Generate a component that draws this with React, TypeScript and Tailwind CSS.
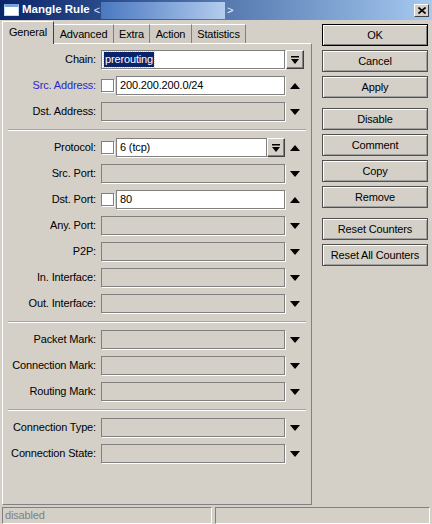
import React from "react";

type Field = {
  label: string;
  blue?: boolean;
  check?: boolean;
  value?: string;
  selected?: boolean;
  arrow?: "up" | "down";
  combo?: boolean;
  chain?: boolean;
};

const groups: Field[][] = [
  [
    { label: "Chain:", value: "prerouting", selected: true, chain: true },
    { label: "Src. Address:", blue: true, check: true, value: "200.200.200.0/24", arrow: "up" },
    { label: "Dst. Address:", arrow: "down" },
  ],
  [
    { label: "Protocol:", check: true, value: "6 (tcp)", combo: true, arrow: "up" },
    { label: "Src. Port:", arrow: "down" },
    { label: "Dst. Port:", check: true, value: "80", arrow: "up" },
    { label: "Any. Port:", arrow: "down" },
    { label: "P2P:", arrow: "down" },
    { label: "In. Interface:", arrow: "down" },
    { label: "Out. Interface:", arrow: "down" },
  ],
  [
    { label: "Packet Mark:", arrow: "down" },
    { label: "Connection Mark:", arrow: "down" },
    { label: "Routing Mark:", arrow: "down" },
  ],
  [
    { label: "Connection Type:", arrow: "down" },
    { label: "Connection State:", arrow: "down" },
  ],
];

const tabs = [
  { name: "Advanced", w: "w-[60px]" },
  { name: "Extra", w: "w-[36px]" },
  { name: "Action", w: "w-[42px]" },
  { name: "Statistics", w: "w-[54px]" },
];

const buttons = [
  ["OK", "Cancel", "Apply"],
  ["Disable", "Comment", "Copy", "Remove"],
  ["Reset Counters", "Reset All Counters"],
];

function Arrow({ dir }: { dir: "up" | "down" }) {
  return (
    <svg width="10" height="6" viewBox="0 0 10 6">
      {dir === "up" ? <polygon points="5,0 10,6 0,6" fill="#000" /> : <polygon points="0,0 10,0 5,6" fill="#000" />}
    </svg>
  );
}

function DropIcon() {
  return (
    <svg width="8" height="8" viewBox="0 0 8 8">
      <rect x="0" y="0" width="8" height="1.5" fill="#000" />
      <polygon points="0,3 8,3 4,8" fill="#000" />
    </svg>
  );
}

function DropButton() {
  return (
    <div className="w-[18px] h-[19px] flex items-center justify-center bg-[#d4d0c8] border border-t-white border-l-white border-r-[#404040] border-b-[#404040] shadow-[inset_-1px_-1px_0_#808080]">
      <DropIcon />
    </div>
  );
}

function Box({ value, selected, width }: { value?: string; selected?: boolean; width: string }) {
  const enabled = value !== undefined;
  return (
    <div
      className={`${width} h-[19px] flex items-center pl-[2px] border border-[#808080] shadow-[1px_1px_0_#fff] ${
        enabled ? "bg-white" : "bg-[#d4d0c8]"
      }`}
    >
      {selected ? (
        <span className="bg-[#0a246a] text-white px-px leading-[15px] outline-1 outline-dotted outline-[#d4d0c8]">{value}</span>
      ) : (
        <span className="pl-px">{value}</span>
      )}
    </div>
  );
}

function Row({ f }: { f: Field }) {
  return (
    <div className="flex items-center h-[19px]">
      <div className={`w-[93px] text-right whitespace-nowrap ${f.blue ? "text-[#2828c8]" : "text-black"}`}>{f.label}</div>
      <div className="ml-[5px] flex items-center">
        {f.check && <div className="w-[13px] h-[13px] bg-white border border-[#808080] shadow-[1px_1px_0_#fff] mr-[2px]" />}
        {f.chain ? (
          <>
            <Box value={f.value} selected width="w-[184px]" />
            <div className="ml-px">
              <DropButton />
            </div>
          </>
        ) : f.combo ? (
          <>
            <Box value={f.value} width="w-[151px]" />
            <DropButton />
          </>
        ) : (
          <Box value={f.value} width={f.check ? "w-[169px]" : "w-[184px]"} />
        )}
        {f.arrow && (
          <div className="w-[20px] flex justify-center">
            <Arrow dir={f.arrow} />
          </div>
        )}
      </div>
    </div>
  );
}

function WinButton({ label, def }: { label: string; def?: boolean }) {
  return (
    <div
      className={`w-[106px] h-[22px] flex items-center justify-center bg-[#d4d0c8] border ${
        def
          ? "border-black shadow-[inset_1px_1px_0_#fff,inset_-1px_-1px_0_#808080]"
          : "border-[#505050] shadow-[inset_1px_1px_0_#fff,inset_-1px_-1px_0_#a0a0a0]"
      }`}
    >
      {label}
    </div>
  );
}

export default function App() {
  return (
    <div className="w-[432px] h-[524px] bg-[#d4d0c8] flex flex-col overflow-hidden font-['Liberation_Sans',Arial,sans-serif] text-[11px] tracking-[-0.15px] text-black">
      {/* Title bar */}
      <div className="h-[20px] flex items-center bg-gradient-to-r from-[#0a246a] to-[#a6caf0] pl-[4px] pr-[3px]">
        <div className="w-[15px] h-[12px] bg-white border border-[#c0d8f8] border-t-[3px] border-t-[#7aa0d8]" />
        <span className="ml-[3px] text-white font-bold text-[11.5px] tracking-normal">Mangle Rule</span>
        <span className="ml-[4px] text-[#e0e8f8]">&lt;</span>
        <span className="ml-[1px] w-[124px] h-[17px] bg-gradient-to-r from-[#4a78c0] to-[#b4ccee]" />
        <span className="ml-[2px] text-[#f0f4ff]">&gt;</span>
        <div className="flex-1" />
        <div className="w-[15px] h-[13px] flex items-center justify-center bg-[#d4d0c8] border border-t-white border-l-white border-r-[#404040] border-b-[#404040]">
          <svg width="8" height="7" viewBox="0 0 8 7">
            <path d="M0.5 0.5 L7.5 6.5 M7.5 0.5 L0.5 6.5" stroke="#000" strokeWidth="1.6" />
          </svg>
        </div>
      </div>

      {/* Main */}
      <div className="flex-1 flex">
        <div className="ml-[2px] w-[310px] flex flex-col">
          {/* Tabs */}
          <div className="h-[23px] flex items-end relative z-10">
            <div className="w-[52px] h-[23px] -mb-px flex items-center justify-center pb-[2px] bg-[#d4d0c8] border-t border-l border-r border-t-white border-l-white border-r-[#404040]">
              General
            </div>
            {tabs.map((t) => (
              <div
                key={t.name}
                className={`${t.w} h-[19px] flex items-center justify-center bg-[#d0ccc4] border-t border-r border-t-white border-r-[#808080]`}
              >
                {t.name}
              </div>
            ))}
          </div>
          {/* Panel */}
          <div className="h-[462px] border border-t-white border-l-white border-r-[#808080] border-b-[#808080] pt-[6px]">
            {groups.map((g, gi) => (
              <div key={gi}>
                {gi > 0 && <div className="mt-[8px] mb-[7px] mx-[5px] h-[2px] border-t border-t-[#a8a49c] border-b border-b-white" />}
                <div className="flex flex-col gap-[7px]">
                  {g.map((f) => (
                    <Row key={f.label} f={f} />
                  ))}
                </div>
              </div>
            ))}
          </div>
        </div>

        {/* Buttons */}
        <div className="ml-[10px] pt-[4px] flex flex-col gap-[10px]">
          {buttons.map((grp, i) => (
            <div key={i} className="flex flex-col gap-[4px]">
              {grp.map((b) => (
                <WinButton key={b} label={b} def={b === "OK"} />
              ))}
            </div>
          ))}
        </div>
      </div>

      {/* Status bar */}
      <div className="h-[17px] flex px-[2px] gap-[3px]">
        <div className="w-[210px] h-[17px] border border-t-[#808080] border-l-[#808080] border-r-white border-b-white pl-[2px] text-[#808080] leading-[15px]">
          disabled
        </div>
        <div className="flex-1 h-[17px] border border-t-[#808080] border-l-[#808080] border-r-white border-b-white" />
      </div>
    </div>
  );
}
